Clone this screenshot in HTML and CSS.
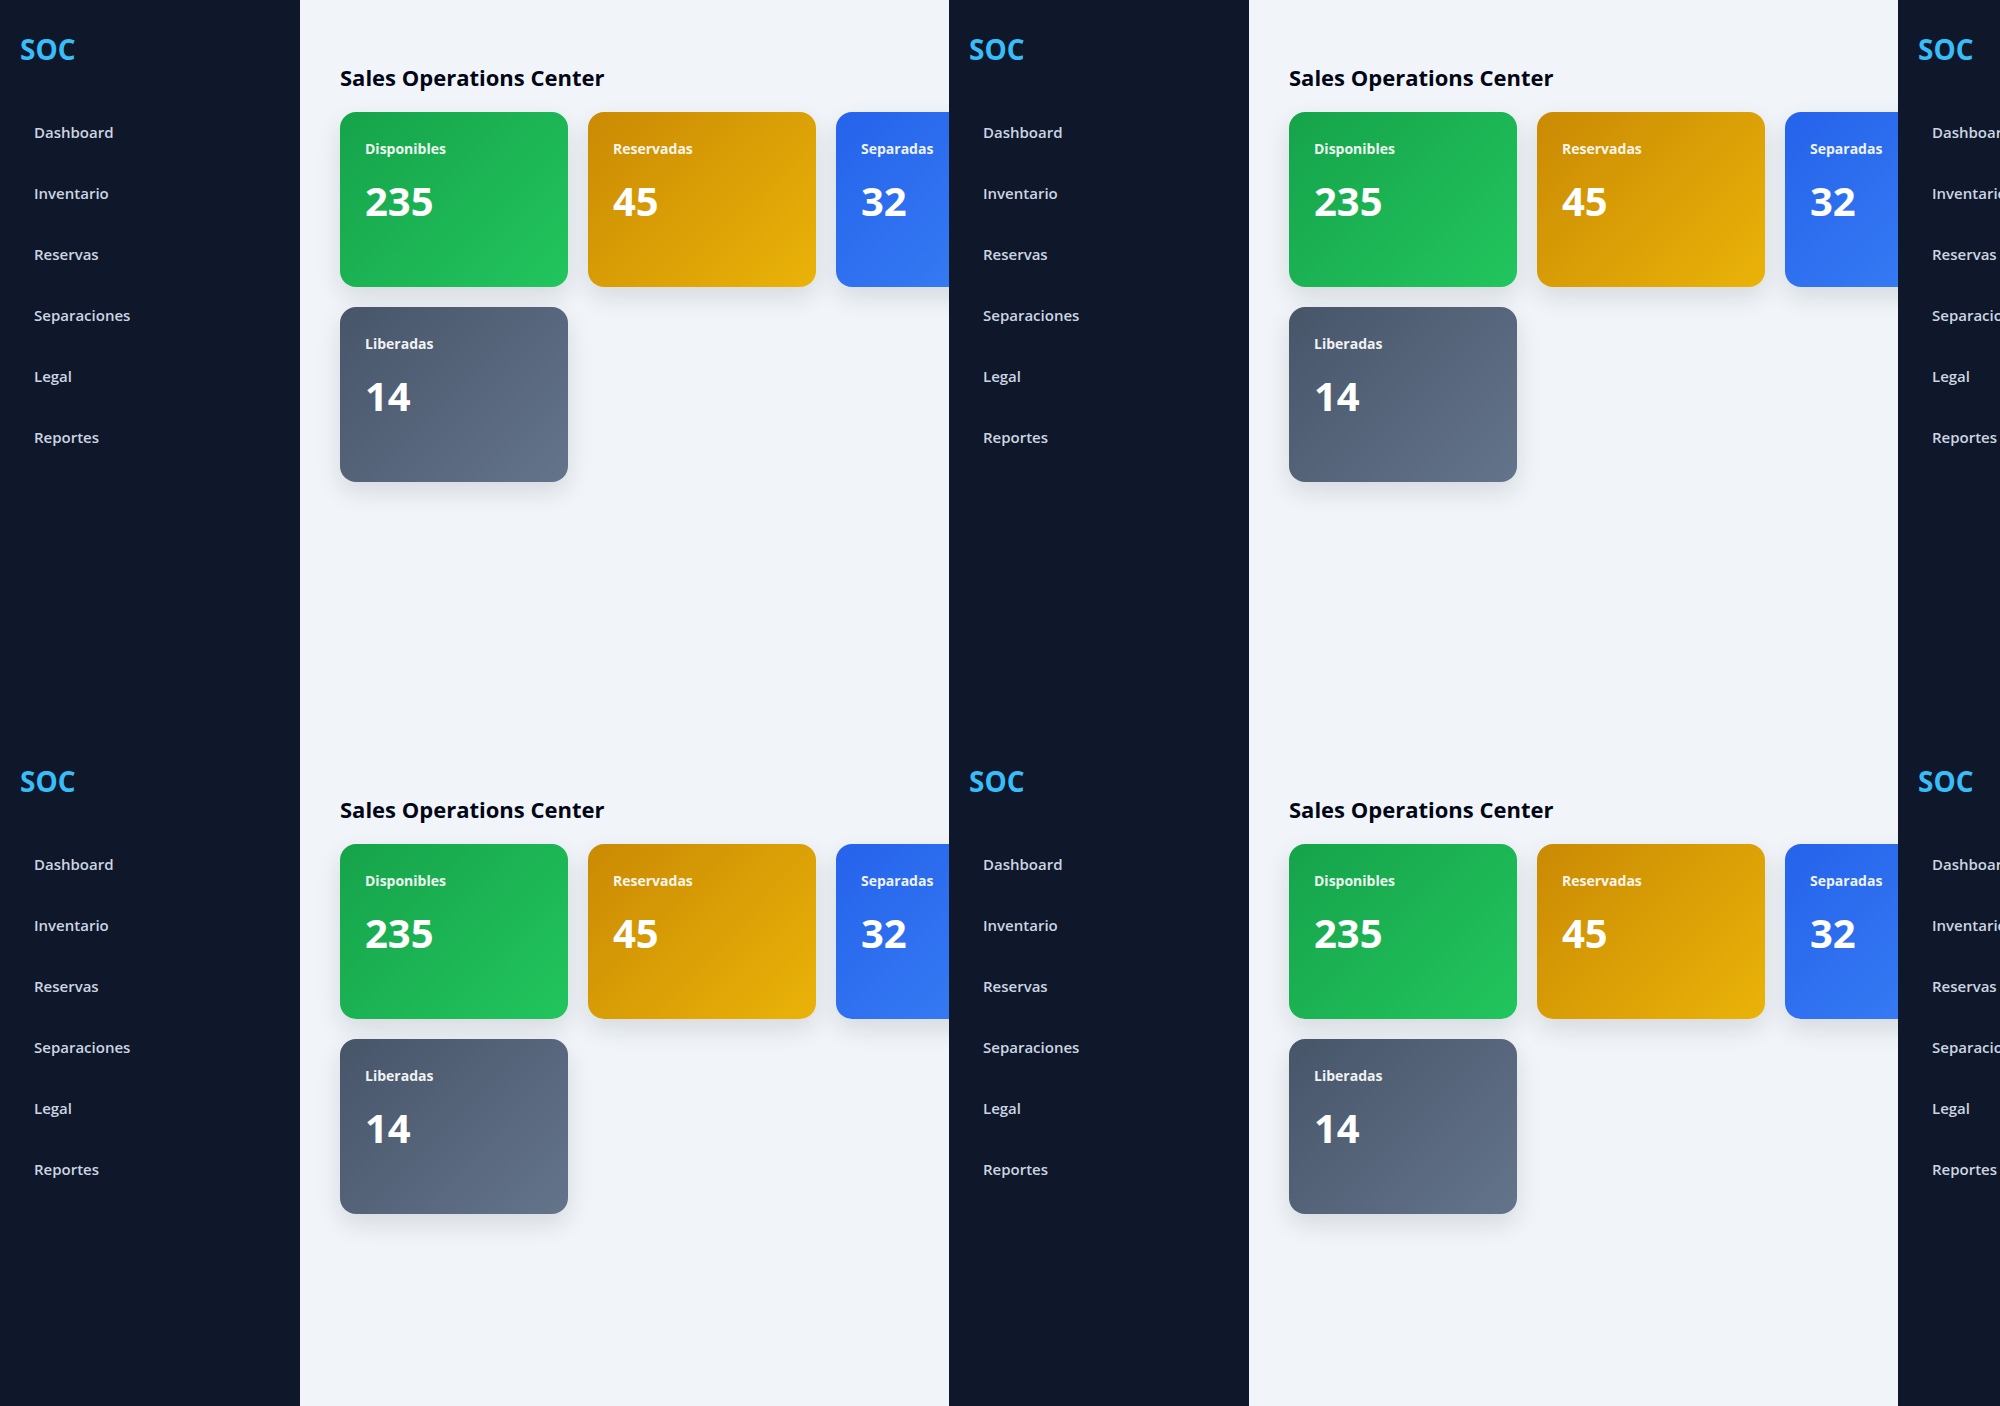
FILE: index.html
```html
<!DOCTYPE html>
<html lang="es">
<head>
  <meta charset="UTF-8">
  <meta name="viewport" content="width=device-width, initial-scale=1.0">
  <title>SOC - Sales Operations Center</title>
  <link rel="stylesheet" href="styles.css">
</head>
<body>
  <div class="wall" id="wall">
    <div class="screen">
      <aside class="sidebar">
        <div class="logo">SOC</div>
        <nav class="nav">
          <a href="#">Dashboard</a>
          <a href="#">Inventario</a>
          <a href="#">Reservas</a>
          <a href="#">Separaciones</a>
          <a href="#">Legal</a>
          <a href="#">Reportes</a>
        </nav>
      </aside>

      <main class="content">
        <h1 class="page-title">Sales Operations Center</h1>
        <div class="stats">
          <div class="stat-card green">
            <div class="stat-label">Disponibles</div>
            <div class="stat-value">235</div>
          </div>
          <div class="stat-card yellow">
            <div class="stat-label">Reservadas</div>
            <div class="stat-value">45</div>
          </div>
          <div class="stat-card blue">
            <div class="stat-label">Separadas</div>
            <div class="stat-value">32</div>
          </div>
          <div class="stat-card gray">
            <div class="stat-label">Liberadas</div>
            <div class="stat-value">14</div>
          </div>
        </div>
      </main>
    </div>
  </div>

  <script>
    // fill the wall: 3 columns x 2 rows of the same screen
    const wall = document.getElementById('wall');
    const screen = wall.querySelector('.screen');
    for (let i = 0; i < 5; i++) {
      wall.appendChild(screen.cloneNode(true));
    }
  </script>
</body>
</html>
```

FILE: styles.css
```css
/* General Reset */
* {
  margin: 0;
  padding: 0;
  box-sizing: border-box;
}

body {
  font-family: "Open Sans", "Noto Sans", sans-serif;
  background-color: #0f172a;
  overflow: hidden;
}

/* Wall of screens */
.wall {
  display: grid;
  grid-template-columns: repeat(3, 949px);
  grid-auto-rows: 732px;
  width: 2000px;
  height: 1406px;
  overflow: hidden;
}

.screen {
  display: flex;
  overflow: hidden;
}

/* Sidebar */
.sidebar {
  width: 300px;
  flex-shrink: 0;
  background-color: #0f172a;
  padding: 32px 20px;
}

.logo {
  font-size: 28px;
  line-height: 34px;
  font-weight: 700;
  color: #38bdf8;
  margin-bottom: 44px;
}

.nav a {
  display: block;
  padding: 12px 14px;
  margin-bottom: 16px;
  font-size: 15px;
  line-height: 21px;
  font-weight: 600;
  color: #cbd5e1;
  text-decoration: none;
}

/* Main content */
.content {
  flex: 1;
  background-color: #f1f5f9;
  padding: 64px 40px;
  overflow: hidden;
}

.page-title {
  font-size: 22px;
  line-height: 26px;
  font-weight: 700;
  color: #020617;
  margin-bottom: 22px;
}

/* Stat cards */
.stats {
  display: grid;
  grid-template-columns: repeat(3, 228px);
  grid-auto-rows: 175px;
  gap: 20px;
}

.stat-card {
  border-radius: 16px;
  padding: 28px 25px;
  color: #fff;
  box-shadow: 0 10px 25px rgba(15, 23, 42, 0.12);
}

.stat-label {
  font-size: 14px;
  line-height: 17px;
  font-weight: 700;
  opacity: 0.92;
}

.stat-value {
  margin-top: 20px;
  font-size: 40px;
  line-height: 48px;
  font-weight: 700;
}

.green {
  background: linear-gradient(135deg, #16a34a, #22c55e);
}

.yellow {
  background: linear-gradient(135deg, #ca8a04, #eab308);
}

.blue {
  background: linear-gradient(135deg, #2563eb, #3b82f6);
}

.gray {
  background: linear-gradient(135deg, #475569, #64748b);
}
```
